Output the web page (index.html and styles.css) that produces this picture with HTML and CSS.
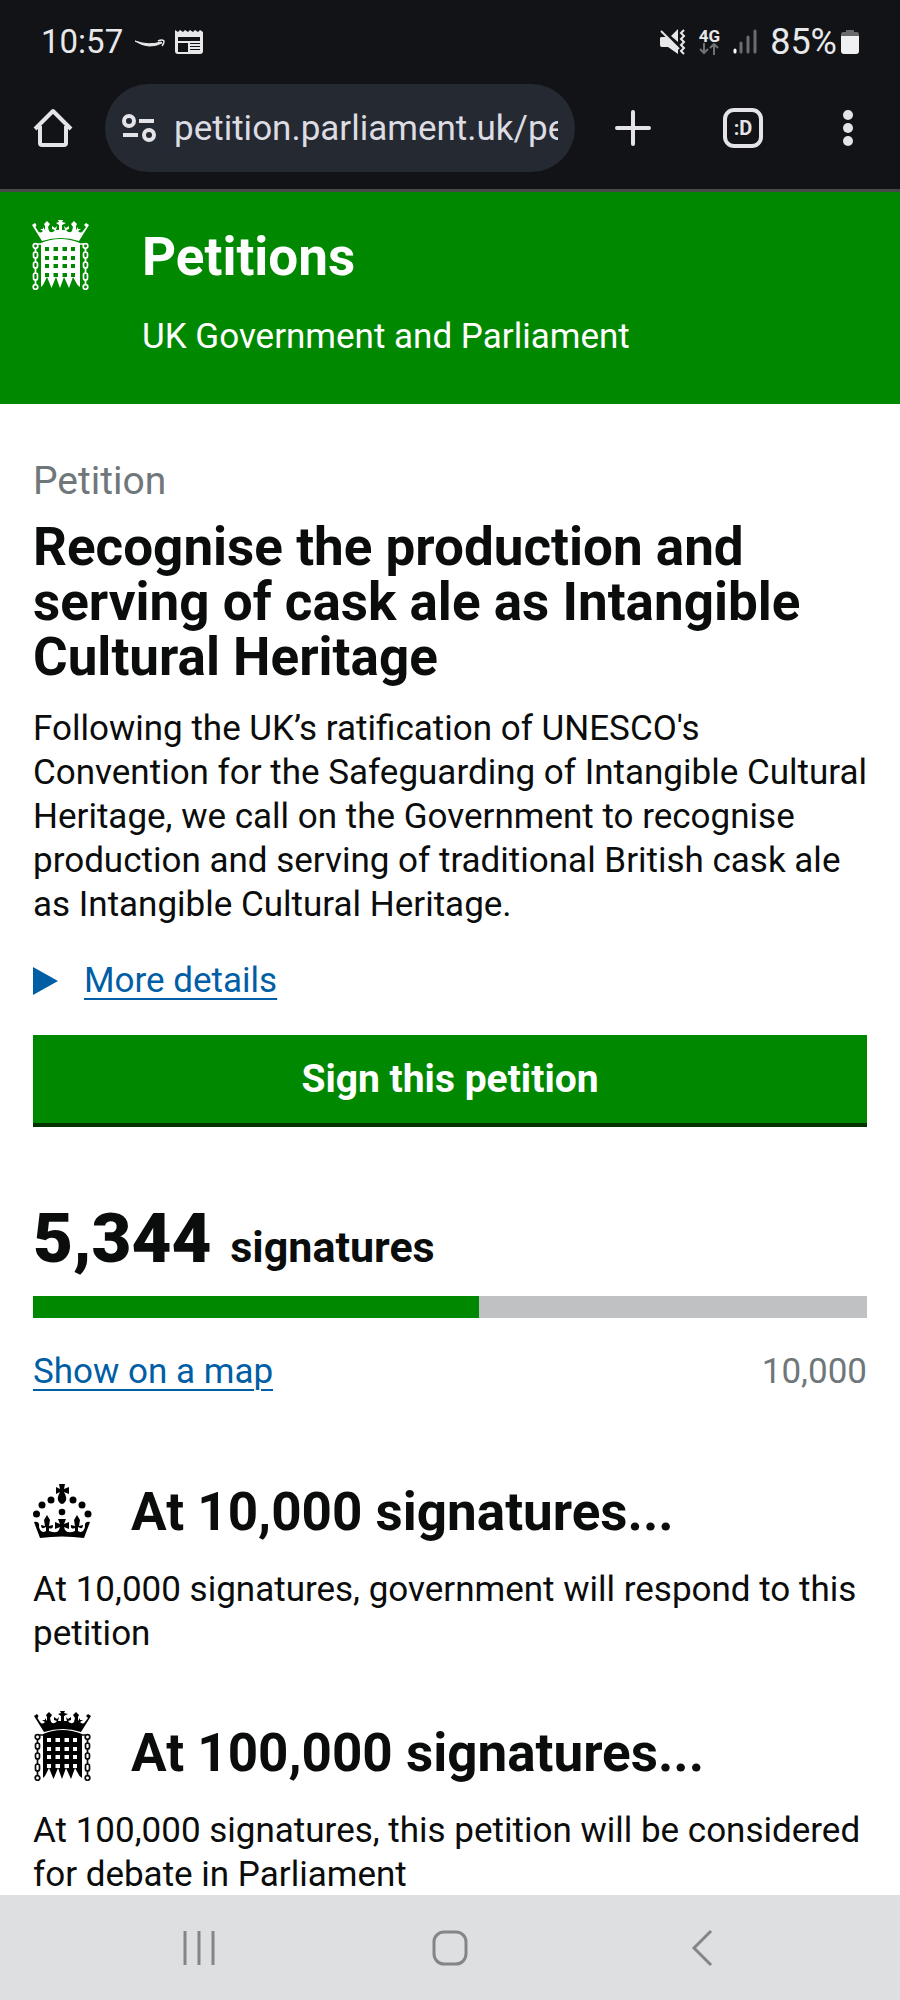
FILE: index.html
```html
<!DOCTYPE html>
<html lang="en-GB">
<head>
    <meta charset="UTF-8">
    <meta name="viewport" content="width=device-width, initial-scale=1">
    <title>Petitions</title>
    <link rel="stylesheet" href="styles.css">
</head>
<body>
    <!-- shared crests -->
    <svg class="symbols" width="0" height="0" aria-hidden="true">
        <symbol id="portcullis" viewBox="0 0 58 70">
            <path d="M0 5L3 3 4.500 5 3.500 7 6 11Q8 14 11 11L8 9 11 9 11 7 13 10 13 6 12 4 15 1 18 4 16 7 17 11Q20 14 23 10L20 9 20 6 23 8 25 6 24 10 27 10 27 5 24 3 27 2 26 0 31 0 30 2 34 3 30 5 30 10 33 10 32 6 34 8 37 6 37 9 34 10Q37 14 40 11L41 7 39 4 42 1 45 4 44 6 44 10 46 7 46 9 49 9 46 11Q49 14 51 11L54 7 52 5 54 3 57 5 47 21Q29 15 10 21Z"/>
            <path fill-rule="evenodd" d="M9 23Q28 15 48 23V67L45.500 65 41 57 37 68 32 57 28 68 24 57 19.500 68 15 57 11 65 9 67ZM13 27V31H17V27ZM21.500 27V31H26V27ZM30.500 27V31H35V27ZM39 27V31H43V27ZM13 36V40H17V36ZM21.500 36V40H26V36ZM30.500 36V40H35V36ZM39 36V40H43V36ZM13 44V48H17V44ZM21.500 44V48H26V44ZM30.500 44V48H35V44ZM39 44V48H43V44ZM13 53V57H17V53ZM21.500 53V57H26V53ZM30.500 53V57H35V53ZM39 53V57H43V53Z"/>
            <g fill="none" stroke="currentColor" stroke-width="1.700">
                <path d="M5 24H10M47 24H52"/>
                <circle cx="3.500" cy="26" r="2.300"/><circle cx="3.500" cy="67" r="2.300"/>
                <rect x="1.500" y="32" width="4" height="6" rx="2"/><rect x="1.500" y="42" width="4" height="6" rx="2"/><rect x="1.500" y="53" width="4" height="7" rx="2"/>
                <path d="M3.500 28V33M3.500 37V43M3.500 47V54M3.500 59V65"/>
                <circle cx="53.500" cy="26" r="2.300"/><circle cx="53.500" cy="67" r="2.300"/>
                <rect x="51.500" y="32" width="4" height="6" rx="2"/><rect x="51.500" y="42" width="4" height="6" rx="2"/><rect x="51.500" y="53" width="4" height="7" rx="2"/>
                <path d="M53.500 28V33M53.500 37V43M53.500 47V54M53.500 59V65"/>
            </g>
        </symbol>
        <symbol id="crown" viewBox="0 0 60 56">
            <path d="M26 0H32L31 5 36 3V10L31 8Q35 15 32 18Q29 22 26 18Q23 15 27 8L23 10V3L27 5Z"/>
            <circle cx="29" cy="28" r="3.300"/>
            <circle cx="18" cy="16" r="3.500"/><circle cx="40" cy="16" r="3.500"/>
            <circle cx="9" cy="21" r="3.500"/><circle cx="49" cy="21" r="3.500"/>
            <circle cx="3.500" cy="30" r="3.500"/><circle cx="55" cy="30" r="3.500"/>
            <path d="M7 54L1 38Q7 37 6 43Q8 50 13 47L13 43Q8 46 8 41L12 42 11 36 14 31 17 36 16 42 20 41Q20 46 16 44V47Q24 50 26 46L27 43 22 45V38L27 40 25 35H33L31 40 36 38V45L31 43 32 46Q35 50 42 47V44Q37 46 38 41L42 42 41 36 44 31 47 36 46 42 50 41Q50 46 45 43V47Q50 50 52 43Q51 37 57 38L51 54Q29 51 7 54Z"/>
        </symbol>
    </svg>

    <div class="browser">
        <div class="status">
            <span class="clock">10:57</span>
            <svg class="swoosh" width="30" height="26" viewBox="0 0 30 26" aria-hidden="true">
                <path d="M0 12Q14 21 27 14L26 13Q14 17 0 12Z" fill="#e8e8ea" stroke="#e8e8ea"/>
                <path d="M23 12Q27 10 29 12Q29 15 27 17" fill="none" stroke="#e8e8ea" stroke-width="1.500"/>
            </svg>
            <svg width="28" height="26" viewBox="0 0 28 26" aria-hidden="true">
                <path d="M0 1L3 3 5 1 8 3 10 1 13 3 15 1 18 3 20 1 23 3 25 1 28 3V22Q28 25 25 25H3Q0 25 0 22Z" fill="#e8e8ea"/>
                <path d="M3 8H25V12H3ZM3 14H13V23H3ZM15 14H25V15H15ZM15 17H25V18H15ZM15 20H25V21H15Z" fill="#121317"/>
            </svg>
            <div class="signals">
                <svg width="26" height="26" viewBox="0 0 26 26" aria-hidden="true">
                    <path d="M0 9Q0 8 2 8H6L18 18V25L8 18H2Q0 18 0 16ZM11 7L18 0V13Z" fill="#e8e8ea"/>
                    <path d="M1 2L19 20" stroke="#e8e8ea" stroke-width="2"/>
                    <path d="M24 1L21 4 24 7 21 10 24 13 21 16 24 19 21 22 24 25" fill="none" stroke="#e8e8ea" stroke-width="2"/>
                </svg>
                <span class="network">4G
                    <svg width="20" height="12" viewBox="0 0 20 12" aria-hidden="true">
                        <path d="M5 0V10M1 6L5 10 9 6M15 12V1M11 5L15 1 19 5" fill="none" stroke="#707174" stroke-width="2"/>
                    </svg>
                </span>
                <svg width="24" height="26" viewBox="0 0 24 26" aria-hidden="true">
                    <g stroke-width="3" stroke-linecap="round" stroke="#6b6c6f">
                        <path d="M2 21V23" stroke="#fff"/><path d="M8 14V23M15 8V23M22 2V23"/>
                    </g>
                </svg>
                <span class="battery">85%
                    <svg width="18" height="26" viewBox="0 0 18 26" aria-hidden="true">
                        <path d="M5 1H13V3H16Q18 3 18 6V8H0V6Q0 3 2 3H5Z" fill="#69696b"/>
                        <path d="M0 7H18V22Q18 25 15 25H3Q0 25 0 22Z" fill="#f0f0f2"/>
                    </svg>
                </span>
            </div>
        </div>
        <div class="toolbar">
            <button class="tool" aria-label="Home">
                <svg width="40" height="40" viewBox="0 0 40 40"><path d="M2 21L20 3 38 21M7 18V35Q7 37 9 37H31Q33 37 33 35V18" fill="none" stroke="#e3e3e8" stroke-width="4" stroke-linejoin="round"/></svg>
            </button>
            <div class="address">
                <svg width="34" height="28" viewBox="0 0 34 28" aria-hidden="true"><g fill="none" stroke="#e3e3e8" stroke-width="4"><circle cx="7" cy="7" r="5"/><path d="M17 7H32M1 21H16"/><circle cx="27" cy="21" r="5"/></g></svg>
                <input class="url" type="text" aria-label="Address" value="petition.parliament.uk/petitions">
            </div>
            <button class="tool" aria-label="New tab">
                <svg width="36" height="36" viewBox="0 0 36 36"><path d="M18 2V34M2 18H34" stroke="#e3e3e8" stroke-width="4" stroke-linecap="round"/></svg>
            </button>
            <button class="tool tabs" aria-label="Tabs">:D</button>
            <button class="tool" aria-label="Menu">
                <svg width="10" height="36" viewBox="0 0 10 36"><g fill="#e3e3e8"><circle cx="5" cy="5" r="5"/><circle cx="5" cy="18" r="5"/><circle cx="5" cy="31" r="5"/></g></svg>
            </button>
        </div>
    </div>

    <header>
        <svg class="crest" width="58" height="70" fill="currentColor" aria-hidden="true"><use href="#portcullis"/></svg>
        <div>
            <a class="site" href="#">Petitions</a>
            <p>UK Government and Parliament</p>
        </div>
    </header>

    <main>
        <p class="kicker">Petition</p>
        <h1>Recognise the production and serving of cask ale as Intangible Cultural Heritage</h1>
        <p>Following the UK’s ratification of UNESCO's Convention for the Safeguarding of Intangible Cultural Heritage, we call on the Government to recognise production and serving of traditional British cask ale as Intangible Cultural Heritage.</p>
        <details>
            <summary><span>More details</span></summary>
        </details>
        <button class="sign">Sign this petition</button>

        <p class="count"><strong>5,344</strong> <label for="signed">signatures</label></p>
        <progress id="signed" value="5344" max="10000"></progress>
        <div class="under">
            <a href="#">Show on a map</a>
            <span>10,000</span>
        </div>

        <section>
            <div class="threshold">
                <svg width="60" height="56" aria-hidden="true"><use href="#crown"/></svg>
                <h2>At 10,000 signatures...</h2>
            </div>
            <p>At 10,000 signatures, government will respond to this petition</p>
        </section>
        <section>
            <div class="threshold">
                <svg width="60" height="70" aria-hidden="true"><use href="#portcullis"/></svg>
                <h2>At 100,000 signatures...</h2>
            </div>
            <p>At 100,000 signatures, this petition will be considered for debate in Parliament</p>
        </section>
    </main>

    <nav>
        <button aria-label="Recent apps"><svg width="36" height="36" viewBox="0 0 36 36"><path d="M4 1V35M18 1V35M32 1V35"/></svg></button>
        <button aria-label="Home screen"><svg width="36" height="36" viewBox="0 0 36 36"><rect x="2" y="2" width="32" height="32" rx="10"/></svg></button>
        <button aria-label="Back"><svg width="36" height="36" viewBox="0 0 36 36"><path d="M28 1L11 18 28 35"/></svg></button>
    </nav>
</body>
</html>
```
FILE: styles.css
```css
*{
    box-sizing: border-box;
    margin: 0;
    padding: 0;
}
body{
    height: 100vh;
    display: flex;
    flex-direction: column;
    font-family: Roboto, "Liberation Sans", sans-serif;
    font-size: 35px;
    line-height: 44px;
    color: #0b0c0c;
    background-color: #fff;
}
button{
    border: 0;
    background: none;
    font-family: inherit;
}
svg{
    display: block;
    flex: none;
}
.symbols{
    position: absolute;
}

/* browser chrome */
.browser{
    background-color: #121317;
    border-bottom: 3px solid #454a47;
    color: #e8e8ea;
    padding: 20px 47px 17px 33px;
}
.status{
    display: flex;
    align-items: center;
    height: 44px;
    padding-left: 8px;
    margin-right: -6px;
    font-size: 33px;
}
.clock{
    margin-right: 12px;
}
.swoosh{
    margin-right: 10px;
}
.signals{
    display: flex;
    align-items: center;
    gap: 13px;
    margin-left: auto;
}
.network{
    font-size: 17px;
    font-weight: bold;
    line-height: 14px;
}
.battery{
    display: flex;
    align-items: center;
    gap: 4px;
    font-size: 36px;
}
.toolbar{
    display: flex;
    align-items: center;
    margin-top: 20px;
}
.tool{
    flex: none;
    display: flex;
    justify-content: center;
    align-items: center;
}
.address{
    flex: 1;
    min-width: 0;
    height: 88px;
    margin: 0 40px 0 32px;
    padding: 0 17px;
    display: flex;
    align-items: center;
    gap: 18px;
    border-radius: 44px;
    background-color: #252932;
}
.url{
    flex: 1;
    min-width: 0;
    border: 0;
    background: none;
    color: #dcdce2;
    font-family: inherit;
    font-size: 35px;
}
.tabs{
    width: 40px;
    height: 40px;
    margin: 0 80px 0 72px;
    border: 4px solid #e3e3e8;
    border-radius: 11px;
    color: #e3e3e8;
    font-size: 20px;
    font-weight: bold;
}

header{
    display: flex;
    gap: 52px;
    padding: 28px 32px 45px;
    background-color: #008800;
    color: #fff;
}
.site{
    display: block;
    color: inherit;
    text-decoration: none;
    font-size: 53px;
    line-height: 74px;
    font-weight: bold;
}
header p{
    margin-top: 21px;
}

main{
    flex: 1;
    min-height: 0;
    padding: 55px 33px 0;
    overflow-y: auto;
    scrollbar-width: none;
}
.kicker{
    font-size: 39px;
    color: #6f777b;
}
h1, h2{
    font-size: 53px;
    line-height: 55px;
}
h1{
    margin: 17px 0 22px;
}
details{
    margin: 32px 0;
}
summary{
    display: flex;
    align-items: center;
    gap: 26px;
    color: #005ea5;
}
summary::before{
    content: "";
    border: solid transparent;
    border-width: 14px 0 14px 25px;
    border-left-color: #005ea5;
}
summary span, .under a{
    color: #005ea5;
    text-decoration: underline;
    text-decoration-thickness: 2px;
    text-underline-offset: 6px;
}
.sign{
    display: block;
    width: 100%;
    height: 92px;
    border-bottom: 4px solid #003300;
    background-color: #008800;
    color: #fff;
    font-size: 39px;
    font-weight: bold;
}
.count{
    margin-top: 68px;
    font-size: 43px;
    line-height: 88px;
    font-weight: bold;
}
.count strong{
    margin-right: 8px;
    font-size: 69px;
}
progress{
    appearance: none;
    display: block;
    width: 100%;
    height: 22px;
    margin-top: 5px;
    border: 0;
}
progress::-webkit-progress-bar{
    background-color: #bfc1c3;
}
progress::-webkit-progress-value{
    background-color: #008800;
}
.under{
    display: flex;
    justify-content: space-between;
    margin-top: 32px;
}
.under span{
    color: #6f777b;
}
section{
    margin-top: 55px;
}
.under + section{
    margin-top: 76px;
}
.threshold{
    display: flex;
    align-items: flex-end;
    gap: 38px;
    min-height: 70px;
    margin-bottom: 28px;
}

nav{
    flex: none;
    display: flex;
    justify-content: space-around;
    align-items: center;
    height: 105px;
    padding: 0 74px;
    background-color: #dedfe1;
}
nav svg{
    fill: none;
    stroke: #848587;
    stroke-width: 3px;
}
```
